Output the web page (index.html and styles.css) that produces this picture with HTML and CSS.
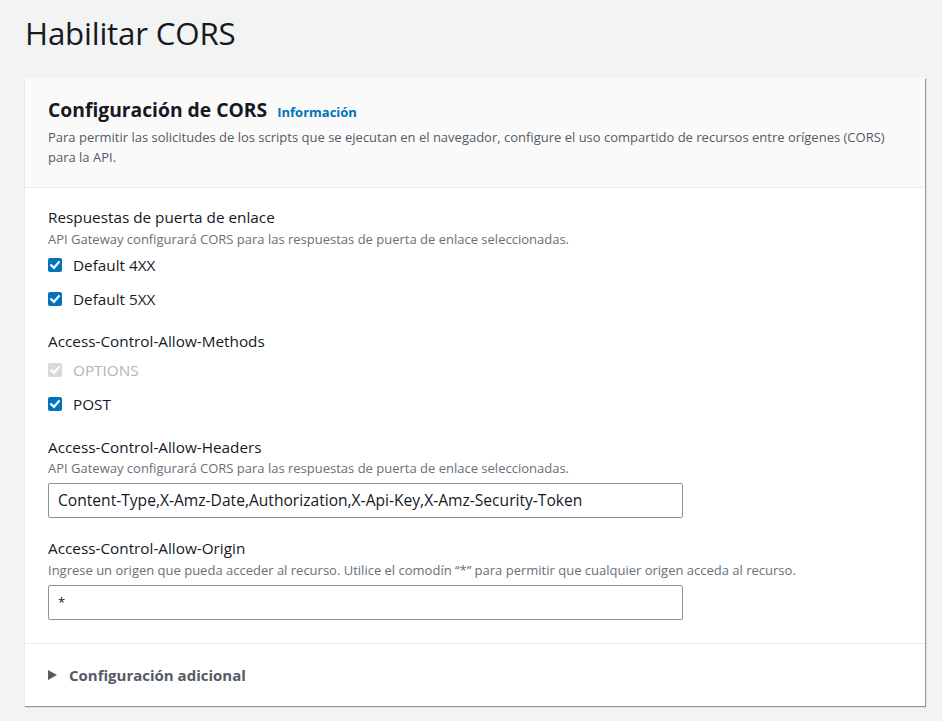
FILE: index.html
```html
<!DOCTYPE html>
<html lang="es">
<head>
<meta charset="utf-8">
<title>Habilitar CORS</title>
<link rel="stylesheet" href="styles.css">
</head>
<body>
<main class="page">
  <h1 class="page-title">Habilitar CORS</h1>
  <section class="card">
    <header class="card-header">
      <h2 class="card-title">Configuración de CORS <a class="info-link" href="#">Información</a></h2>
      <p class="card-desc">Para permitir las solicitudes de los scripts que se ejecutan en el navegador, configure el uso compartido de recursos entre orígenes (CORS) para la API.</p>
    </header>
    <div class="card-body">
      <div class="field">
        <div class="field-label">Respuestas de puerta de enlace</div>
        <div class="field-desc">API Gateway configurará CORS para las respuestas de puerta de enlace seleccionadas.</div>
        <div class="checks">
          <label class="check"><span class="box"><svg viewBox="0 0 14 14"><path d="M3.2 7.2 L6 9.8 L10.8 4.2" /></svg></span>Default 4XX</label>
          <label class="check"><span class="box"><svg viewBox="0 0 14 14"><path d="M3.2 7.2 L6 9.8 L10.8 4.2" /></svg></span>Default 5XX</label>
        </div>
      </div>
      <div class="field">
        <div class="field-label">Access-Control-Allow-Methods</div>
        <div class="checks checks-nodesc">
          <label class="check disabled"><span class="box"><svg viewBox="0 0 14 14"><path d="M3.2 7.2 L6 9.8 L10.8 4.2" /></svg></span>OPTIONS</label>
          <label class="check"><span class="box"><svg viewBox="0 0 14 14"><path d="M3.2 7.2 L6 9.8 L10.8 4.2" /></svg></span>POST</label>
        </div>
      </div>
      <div class="field field-wide">
        <div class="field-label">Access-Control-Allow-Headers</div>
        <div class="field-desc flush">API Gateway configurará CORS para las respuestas de puerta de enlace seleccionadas.</div>
        <div class="input">Content-Type,X-Amz-Date,Authorization,X-Api-Key,X-Amz-Security-Token</div>
      </div>
      <div class="field field-tight">
        <div class="field-label">Access-Control-Allow-Origin</div>
        <div class="field-desc">Ingrese un origen que pueda acceder al recurso. Utilice el comodín “*” para permitir que cualquier origen acceda al recurso.</div>
        <div class="input small-text">*</div>
      </div>
    </div>
    <footer class="card-footer">
      <span class="caret"></span>
      <span class="expander-label">Configuración adicional</span>
    </footer>
  </section>
</main>
</body>
</html>
```

FILE: styles.css
```css
* { box-sizing: border-box; }
html, body { margin: 0; padding: 0; }
body {
  background: #f2f3f3;
  font-family: "Open Sans", "Noto Sans", sans-serif;
  color: #16191f;
  width: 942px;
  height: 721px;
  overflow: hidden;
}
.page {
  padding: 12px 17px 0 24px;
}
.page-title {
  margin: 0 0 0 1px;
  font-size: 31.3px;
  font-weight: 400;
  line-height: 42px;
  letter-spacing: -0.2px;
}
.card {
  margin-top: 24px;
  background: #fff;
  border-left: 1px solid #eaeded;
  box-shadow: 1px 1px 1px 0 rgba(0, 28, 36, 0.3), 1px 1px 1px 0 rgba(0, 28, 36, 0.15);
}
.card-header {
  background: #fafafa;
  border-bottom: 1px solid #eaeded;
  padding: 17px 23px 20px 23px;
}
.card-title {
  margin: 0;
  font-size: 19.3px;
  font-weight: 700;
  line-height: 30px;
}
.info-link {
  font-size: 13px;
  font-weight: 700;
  color: #0073bb;
  text-decoration: none;
  margin-left: 5px;
}
.card-desc {
  margin: 0;
  font-size: 13px;
  line-height: 20px;
  color: #545b64;
}
.card-body {
  padding: 18px 23px 23px 23px;
  border-bottom: 1px solid #eaeded;
}
.field + .field { margin-top: 20px; }
.field.field-wide { margin-top: 21px; }
.field.field-tight { margin-top: 19px; }
.field-label {
  font-size: 15.3px;
  line-height: 22px;
}
.field-desc {
  margin-top: 1px;
  font-size: 13px;
  line-height: 20px;
  color: #687078;
}
.field-desc.flush { margin-top: 0; }
.checks {
  display: flex;
  flex-direction: column;
  gap: 12px;
  margin-top: 5px;
}
.checks.checks-nodesc { margin-top: 7px; }
.check {
  display: flex;
  align-items: center;
  gap: 11px;
  font-size: 15.3px;
  line-height: 22px;
}
.box {
  width: 14px;
  height: 14px;
  border-radius: 2px;
  background: #0073bb;
  display: flex;
}
.box svg { width: 14px; height: 14px; }
.box path {
  fill: none;
  stroke: #fff;
  stroke-width: 2.2;
  stroke-linecap: square;
}
.check.disabled { color: #aab7b8; }
.check.disabled .box { background: #d5dbdb; }
.input {
  margin-top: 5px;
  width: 635px;
  height: 35px;
  border: 1px solid #879596;
  border-radius: 2px;
  padding: 0 9px;
  font-size: 15.6px;
  line-height: 33px;
}
.input.small-text { font-size: 13px; }
.card-footer {
  display: flex;
  align-items: center;
  padding: 0 23px;
  height: 62px;
}
.caret {
  width: 0;
  height: 0;
  border-top: 5.5px solid transparent;
  border-bottom: 5.5px solid transparent;
  border-left: 9px solid #545b64;
  margin-right: 12px;
}
.expander-label {
  font-size: 15px;
  font-weight: 700;
  color: #545b64;
}
```
